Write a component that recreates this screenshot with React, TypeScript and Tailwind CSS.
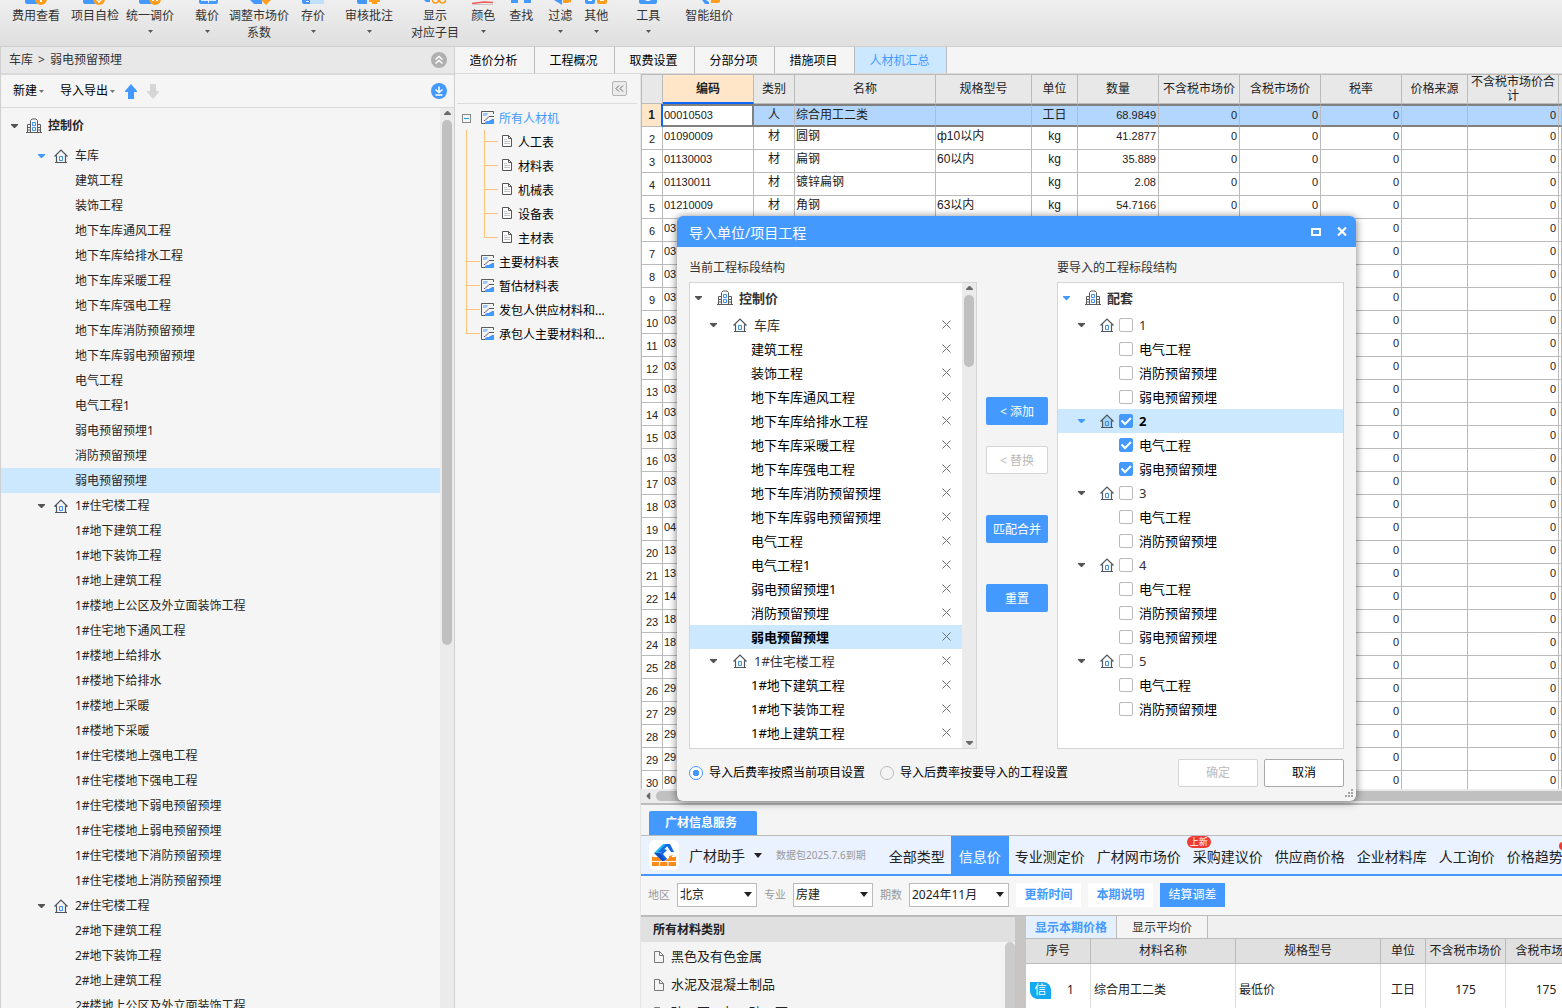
import React from "react";

/* ---------- icons ---------- */

function Caret({ className = "" }: { className?: string }) {
  return (
    <svg className={"shrink-0 " + className} width="7" height="4" viewBox="0 0 7 4" fill="currentColor" aria-hidden="true">
      <path d="M0 0h7v1L4 4H3L0 1z" />
    </svg>
  );
}

function SmallCaret({ className = "" }: { className?: string }) {
  return (
    <svg className={"shrink-0 " + className} width="5" height="3" viewBox="0 0 5 3" fill="currentColor" aria-hidden="true">
      <path d="M0 0h5L2.5 3z" />
    </svg>
  );
}

function BuildingIcon() {
  return (
    <svg className="shrink-0" width="16" height="16" viewBox="0 0 16 16" fill="none" aria-hidden="true">
      <path d="M4.500 14V2.500l1.500-1.500h4l1.500 1.500V14M1.500 14V6.500h3M14.500 14V6.500h-3M0 14.500h16M2 9.500h2M2 12h2M12 9.500h2M12 12h2" stroke="#5c5c5c" />
      <path d="M6.500 4.500h3v3h-3zM6.500 9.500h3v3h-3z" stroke="#3c8ef0" />
    </svg>
  );
}

function HouseIcon({ filled = false }: { filled?: boolean }) {
  return (
    <svg className="shrink-0" width="14" height="14" viewBox="0 0 14 14" fill="none" aria-hidden="true">
      <path d="M2.500 6v7.500h9V6L7 1.500z" fill={filled ? "#aad4f8" : "none"} />
      <path d="M0.500 7.500L7 1 13.500 7.500M2.500 6.500v7M11.500 6.500v7M1 13.500h12" stroke="#4d5560" strokeWidth="1.200" />
      <path d="M5.500 7.500h3v4h-3z" stroke="#3c8ef0" />
    </svg>
  );
}

function SheetIcon() {
  return (
    <svg className="mb-[2px] shrink-0" width="13" height="13" viewBox="0 0 13 13" fill="none" aria-hidden="true">
      <path d="M12.500 3V0.500h-12v12H4" stroke="#5a5a5a" />
      <path d="M2 2h5v1L5 5H2z" fill="#9cc9fb" />
      <path d="M3 9.500h1l4-4h5" stroke="#5a5a5a" />
      <path d="M4 13v-2l2-1h2l1-1h1l1-1h2v5z" fill="#4499ff" />
    </svg>
  );
}

function DocIcon() {
  return (
    <svg className="mb-[2px] shrink-0" width="10" height="12" viewBox="0 0 10 12" fill="none" aria-hidden="true">
      <path d="M0.500 0.500h6l3 3v8h-9z" fill="#fff" stroke="#555" />
      <path d="M6.500 0.500v3h3" stroke="#555" />
      <path d="M2 4.500h3M2 6.500h6M2 8.500h6" stroke="#c4c4c4" />
    </svg>
  );
}

function FileIcon() {
  return (
    <svg className="shrink-0" width="10" height="12" viewBox="0 0 10 12" fill="none" stroke="#777" aria-hidden="true">
      <path d="M0.500 0.500h5l4 4v7h-9zM5.500 0.500v4h4" />
    </svg>
  );
}

function CrossIcon() {
  return (
    <svg width="9" height="9" viewBox="0 0 9 9" stroke="#707070" fill="none" aria-hidden="true">
      <path d="M0.500 0.500l8 8M8.500 0.500l-8 8" />
    </svg>
  );
}

const B = "#4499ff";
const O = "#ff9d1e";

const ribbonIcons: Record<string, React.ReactNode> = {
  fee: (<><path d="M1 0h14v4H3a2 2 0 0 1-2-2z" fill={B} /><circle cx="17" cy="-1" r="6" fill={O} /><path d="M16 0h2v2h-2z" fill="#fff" /></>),
  check: (<><path d="M0 0h12v4H2a2 2 0 0 1-2-2z" fill={B} /><circle cx="16" cy="-1" r="6" fill={O} /><path d="M13 -1l3 3 4-4" stroke="#fff" strokeWidth="1.500" fill="none" /></>),
  adjust: (<><path d="M1 0h12v4H3a2 2 0 0 1-2-2z" fill={B} /><circle cx="17" cy="-1" r="6" fill={O} /><path d="M14 0h2v1h-2zM18 0h2v1h-2z" fill="#fff" /></>),
  load: (<><path d="M4 0h19v2a2 2 0 0 1-2 2H6a2 2 0 0 1-2-2z" fill={B} /><path d="M13 0h1v3h-1zM6 0h15v1H6z" fill="#dcebff" /></>),
  market: (<><path d="M3 0h12v4H7z" fill={B} /><path d="M14 0h10l-5 5z" fill={O} /></>),
  save: (<><path d="M1 0h10v4H3a2 2 0 0 1-2-2z" fill={B} /><path d="M9 0h14v4H9z" fill="#bfe0ff" /><path d="M5 1h3v1H5z" fill="#fff" /></>),
  review: (<><path d="M0 0h10v4H2a2 2 0 0 1-2-2z" fill={B} /><path d="M12 0h11v2H12zM15 2h5v2h-5z" fill={O} /></>),
  show: (<><path d="M1 0h6v2H3z" fill={B} /><circle cx="12.500" cy="0" r="3" fill="none" stroke={O} strokeWidth="1.500" /><circle cx="19.500" cy="0" r="3" fill="none" stroke={O} strokeWidth="1.500" /></>),
  color: (<><path d="M1 3.500l12-1.500 9 0.500" stroke="#ef5b5b" strokeWidth="1.500" fill="none" /><path d="M2 4.500h20" stroke="#c9c9c9" /></>),
  find: <path d="M2 0h7v3H2zM15 0h7v3h-7z" fill={B} />,
  filter: (<><path d="M6 0h8v5z" fill={B} /><path d="M15 0h8v2l-4 1h-4z" fill={O} /></>),
  other: (<><path d="M1 0h10v2a2 2 0 0 1-2 2H3a2 2 0 0 1-2-2z" fill={B} /><path d="M4 0h4v1H4z" fill="#fff" /><path d="M13 0h10v2a2 2 0 0 1-2 2h-6a2 2 0 0 1-2-2z" fill={O} /><path d="M16 0h4v1h-4z" fill="#fff" /></>),
  tool: (<><path d="M3 0h18v2a2 2 0 0 1-2 2H5a2 2 0 0 1-2-2z" fill={B} /><path d="M9 0h6l-2 1h-2z" fill="#fff" /></>),
  smart: (<><path d="M5 0h4l3 2v2H8z" fill={B} /><path d="M14 0h9v2l-2 1h-7z" fill={O} /></>),
};

/* ---------- ribbon ---------- */

type RibbonItem = { icon: string; lines: string[]; arrow?: boolean; space: string };

const ribbon: RibbonItem[] = [
  { icon: "fee", lines: ["费用查看"], space: "ml-3" },
  { icon: "check", lines: ["项目自检"], space: "ml-[11px]" },
  { icon: "adjust", lines: ["统一调价"], arrow: true, space: "ml-[7px]" },
  { icon: "load", lines: ["载价"], arrow: true, space: "ml-[21px]" },
  { icon: "market", lines: ["调整市场价", "系数"], space: "ml-[10px]" },
  { icon: "save", lines: ["存价"], arrow: true, space: "ml-3" },
  { icon: "review", lines: ["审核批注"], arrow: true, space: "ml-5" },
  { icon: "show", lines: ["显示", "对应子目"], space: "ml-[18px]" },
  { icon: "color", lines: ["颜色"], arrow: true, space: "ml-3" },
  { icon: "find", lines: ["查找"], space: "ml-[14px]" },
  { icon: "filter", lines: ["过滤"], arrow: true, space: "ml-[15px]" },
  { icon: "other", lines: ["其他"], arrow: true, space: "ml-3" },
  { icon: "tool", lines: ["工具"], arrow: true, space: "ml-7" },
  { icon: "smart", lines: ["智能组价"], space: "ml-[25px]" },
];

function Ribbon() {
  return (
    <header className="flex h-[47px] shrink-0 items-start border-b border-[#cfcfcf] bg-linear-to-b from-[#efefef] to-[#dfdfdf]">
      {ribbon.map((r) => (
        <button key={r.icon} className={"flex shrink-0 flex-col items-center leading-[17px] text-[#333] " + r.space}>
          <svg className="mb-px" width="24" height="6" viewBox="0 0 24 6" aria-hidden="true">{ribbonIcons[r.icon]}</svg>
          {r.lines.map((l) => (
            <span key={l} className="whitespace-nowrap">{l}</span>
          ))}
          {r.arrow && <SmallCaret className="mt-[6px] text-[#555]" />}
        </button>
      ))}
    </header>
  );
}

/* ---------- project tree ---------- */

type Branch = { name: string; open?: boolean; items: string[] };

const garage = [
  "建筑工程", "装饰工程", "地下车库通风工程", "地下车库给排水工程", "地下车库采暖工程", "地下车库强电工程",
  "地下车库消防预留预埋", "地下车库弱电预留预埋", "电气工程", "电气工程1", "弱电预留预埋1", "消防预留预埋", "弱电预留预埋",
];

const branches: Branch[] = [
  { name: "车库", open: true, items: garage },
  {
    name: "1#住宅楼工程",
    items: [
      "1#地下建筑工程", "1#地下装饰工程", "1#地上建筑工程", "1#楼地上公区及外立面装饰工程", "1#住宅地下通风工程",
      "1#楼地上给排水", "1#楼地下给排水", "1#楼地上采暖", "1#楼地下采暖", "1#住宅楼地上强电工程", "1#住宅楼地下强电工程",
      "1#住宅楼地下弱电预留预埋", "1#住宅楼地上弱电预留预埋", "1#住宅楼地下消防预留预埋", "1#住宅楼地上消防预留预埋",
    ],
  },
  { name: "2#住宅楼工程", items: ["2#地下建筑工程", "2#地下装饰工程", "2#地上建筑工程", "2#楼地上公区及外立面装饰工程"] },
];

function ProjectPanel() {
  return (
    <aside className="flex w-[455px] shrink-0 flex-col overflow-hidden border-x border-[#d0d0d0] bg-[#f5f5f5]">
      <div className="flex h-[28px] shrink-0 items-center justify-between border-b-2 border-[#d9d9d9] bg-[#e8e8e8] pr-[7px] pl-2 text-[#333]">
        <span className="flex gap-[5px]"><span>车库</span><span>&gt;</span><span>弱电预留预埋</span></span>
        <button aria-label="收起">
          <svg width="16" height="16" viewBox="0 0 16 16" fill="none" aria-hidden="true">
            <circle cx="8" cy="8" r="8" fill="#b0b0b0" />
            <path d="M4.500 7.500L8 4.500l3.500 3M4.500 11.500L8 8.500l3.500 3" stroke="#fff" strokeWidth="1.500" />
          </svg>
        </button>
      </div>
      <div className="flex h-[33px] shrink-0 items-center border-b border-[#d9d9d9] pr-[7px] pl-3 text-black">
        <button className="flex items-center gap-[2px]">新建<SmallCaret className="text-[#777]" /></button>
        <button className="ml-4 flex items-center gap-[2px]">导入导出<SmallCaret className="text-[#777]" /></button>
        <button aria-label="上移" className="ml-[10px]">
          <svg width="12" height="15" viewBox="0 0 12 15" fill={B} aria-hidden="true"><path d="M6 0l6 7v1H9v7H3V8H0V7z" /></svg>
        </button>
        <button aria-label="下移" className="ml-[10px]">
          <svg width="12" height="15" viewBox="0 0 12 15" fill="#d6d6d6" aria-hidden="true"><path d="M6 15L0 8V7h3V0h6v7h3v1z" /></svg>
        </button>
        <button aria-label="下载" className="ml-auto">
          <svg width="16" height="16" viewBox="0 0 16 16" fill="none" aria-hidden="true">
            <circle cx="8" cy="8" r="8" fill={B} />
            <path d="M8 3.500v6M4.500 6.500L8 9.500l3.500-3M4.500 12h7" stroke="#fff" strokeWidth="1.500" />
          </svg>
        </button>
      </div>
      <div className="flex min-h-0 flex-1">
        <ul className="min-w-0 flex-1 overflow-hidden text-[#262626]">
          <li className="flex h-[35px] items-center pl-[10px] font-bold">
            <Caret className="mr-2 text-[#555]" />
            <BuildingIcon />
            <span className="ml-[6px]">控制价</span>
          </li>
          {branches.map((b) => (
            <React.Fragment key={b.name}>
              <li className="flex h-[25px] items-center pl-[37px]">
                <Caret className={b.open ? "mr-[9px] text-[#4499ff]" : "mr-[9px] text-[#555]"} />
                <HouseIcon />
                <span className="ml-[7px]">{b.name}</span>
              </li>
              {b.items.map((n) => (
                <li key={n} className={"flex h-[25px] items-center pl-[74px] " + (n === "弱电预留预埋" ? "bg-[#cce8ff]" : "")}>{n}</li>
              ))}
            </React.Fragment>
          ))}
        </ul>
        <div className="flex w-[14px] flex-col items-center bg-[#ebebeb] text-[#6a6a6a]">
          <Caret className="mt-[3px] rotate-180" />
          <div className="mt-[5px] h-[525px] w-[10px] rounded-full bg-[#c0c0c0]" />
        </div>
      </div>
    </aside>
  );
}

/* ---------- tabs and report tree ---------- */

const tabs = ["造价分析", "工程概况", "取费设置", "分部分项", "措施项目"];

function Tabs() {
  return (
    <nav className="flex h-[27px] shrink-0 border-b border-[#d9d9d9] bg-[#f5f5f5] text-black">
      {tabs.map((t) => (
        <button key={t} className="w-20 border-r border-[#bbb] pt-[2px] pr-[2px]">{t}</button>
      ))}
      <button className="w-[92px] border-r border-[#bbb] bg-[#cce8ff] pr-[2px] pt-px text-[#4499ff]">人材机汇总</button>
    </nav>
  );
}

function Connector({ last = false }: { last?: boolean }) {
  return (
    <span className="flex h-full w-[14px] shrink-0 flex-col">
      <span className="h-1/2 border-b border-l border-[#ffc47a]" />
      <span className={last ? "h-1/2" : "h-1/2 border-l border-[#ffc47a]"} />
    </span>
  );
}

const subReports = ["人工表", "材料表", "机械表", "设备表", "主材表"];
const reports = ["主要材料表", "暂估材料表", "发包人供应材料和...", "承包人主要材料和..."];

function ReportTree() {
  return (
    <aside className="w-[186px] shrink-0 border-r border-[#e4e4e4] bg-[#f5f5f5] pl-[2px] text-black">
      <div className="mr-[3px] flex h-[30px] items-center justify-end border-b border-[#dcdcdc]">
        <button aria-label="折叠" className="mr-[10px] flex size-[15px] items-center justify-center rounded-xs border border-[#b5b5b5] bg-[#ebebeb]">
          <svg width="9" height="7" viewBox="0 0 9 7" fill="none" stroke="#666" aria-hidden="true">
            <path d="M4 0.500l-3 3 3 3M8 0.500l-3 3 3 3" />
          </svg>
        </button>
      </div>
      <ul className="pt-[2px] pl-[5px]">
        <li className="flex h-6 items-center">
          <span className="mr-[10px] flex size-[9px] items-center justify-center border border-[#888]">
            <span className="h-px w-[5px] bg-[#0aa0d8]" />
          </span>
          <SheetIcon />
          <span className="ml-[5px] pt-px text-[#4499ff]">所有人材机</span>
        </li>
        {subReports.map((n, i) => (
          <li key={n} className="flex h-6 items-center pl-1">
            <span className="h-full w-[18px] border-l border-[#ffc47a]" />
            <Connector last={i === subReports.length - 1} />
            <span className="ml-1"><DocIcon /></span>
            <span className="ml-[6px] pt-px">{n}</span>
          </li>
        ))}
        {reports.map((n, i) => (
          <li key={n} className="flex h-6 items-center pl-1">
            <Connector last={i === reports.length - 1} />
            <span className="ml-px"><SheetIcon /></span>
            <span className="ml-[5px] pt-px">{n}</span>
          </li>
        ))}
      </ul>
    </aside>
  );
}

/* ---------- resource grid ---------- */

type Row = { code: string; kind?: string; name?: string; spec?: string; unit?: string; qty?: string };

const head: Row[] = [
  { code: "00010503", kind: "人", name: "综合用工二类", unit: "工日", qty: "68.9849" },
  { code: "01090009", kind: "材", name: "圆钢", spec: "ф10以内", unit: "kg", qty: "41.2877" },
  { code: "01130003", kind: "材", name: "扁钢", spec: "60以内", unit: "kg", qty: "35.889" },
  { code: "01130011", kind: "材", name: "镀锌扁钢", unit: "kg", qty: "2.08" },
  { code: "01210009", kind: "材", name: "角钢", spec: "63以内", unit: "kg", qty: "54.7166" },
];
const prefixes = "03 03 03 03 03 03 03 03 03 03 03 03 03 04 13 13 14 18 18 28 29 29 29 29 80".split(" ");
const rows: Row[] = [...head, ...prefixes.map((code) => ({ code }))];

const headings = ["类别", "名称", "规格型号", "单位", "数量", "不含税市场价", "含税市场价", "税率", "价格来源", "不含税市场价合计"];

function Grid() {
  return (
    <div className="flex min-h-0 flex-1 flex-col">
      <div className="min-h-0 flex-1 overflow-hidden bg-white">
        <table className="w-full table-fixed border-separate border-spacing-0 border-t border-l border-[#bbb] font-['Liberation_Sans','Noto_Sans_CJK_SC',sans-serif] text-[#222]">
          <colgroup>
            <col className="w-[21px]" /><col className="w-[91px]" /><col className="w-[41px]" /><col className="w-[141px]" />
            <col className="w-[96px]" /><col className="w-[46px]" /><col className="w-[81px]" /><col className="w-[81px]" />
            <col className="w-[81px]" /><col className="w-[81px]" /><col className="w-[66px]" /><col className="w-[91px]" /><col />
          </colgroup>
          <thead>
            <tr className="h-[29px] bg-[#e8e8e8] leading-[14px]">
              <th className="border-r border-b border-[#bbb] p-0" />
              <th className="border-r border-b-2 border-r-[#bbb] border-b-[#0a66ff] bg-[#ffe6c8] p-0">编码</th>
              {headings.map((h) => (
                <th key={h} className="border-r border-b border-[#bbb] p-0 font-normal">{h}</th>
              ))}
              <th className="border-b border-[#bbb] p-0" />
            </tr>
          </thead>
          <tbody>
            {rows.map((r, i) => {
              const first = i === 0;
              const cell = first
                ? "border-r border-y-2 border-r-[#bbb] border-y-[#808080] bg-[#b3d6ff] p-0 align-top "
                : "border-r border-b border-[#bbb] p-0 align-top ";
              const num = cell + "pr-[2px]! text-right text-[11px]";
              return (
                <tr key={i} className="h-[23px] leading-[19px]">
                  <th className={first ? "border-r-2 border-b border-r-[#0a66ff] border-b-[#bbb] bg-[#ffe6c8] p-0" : "border-r border-b border-[#bbb] p-0 pt-[2px] text-[11px] font-normal"}>{i + 1}</th>
                  <td className={first ? "border-2 border-l-0 border-[#808080] bg-white p-0 pl-px align-top text-[11px]" : "border-r border-b border-[#bbb] p-0 pl-px align-top text-[11px]"}>{r.code}</td>
                  <td className={cell + "text-center"}>{r.kind}</td>
                  <td className={cell + "pl-px!"}>{r.name}</td>
                  <td className={cell + "pl-px!"}>{r.spec}</td>
                  <td className={cell + "text-center"}>{r.unit}</td>
                  <td className={num}>{r.qty}</td>
                  <td className={num}>0</td>
                  <td className={num}>0</td>
                  <td className={num}>0</td>
                  <td className={cell} />
                  <td className={num}>0</td>
                  <td className={cell} />
                </tr>
              );
            })}
          </tbody>
        </table>
      </div>
      <div className="flex h-[14px] shrink-0 items-center bg-[#ebebeb] pl-[4px] text-[#6a6a6a]">
        <Caret className="rotate-90" />
        <div className="ml-1 h-[10px] flex-1 rounded-l-full bg-[#c0c0c0]" />
      </div>
    </div>
  );
}

/* ---------- price service ---------- */

function Picker({ label, value, width }: { label: string; value: string; width: string }) {
  return (
    <label className="flex items-center gap-[7px] text-[11px] text-[#999]">
      {label}
      <span className={"relative flex items-center " + width}>
        <select className="h-6 w-full appearance-none rounded-none border border-[#bbb] bg-white pl-[2px] text-xs text-[#222]" defaultValue={value}>
          <option>{value}</option>
        </select>
        <svg className="pointer-events-none absolute right-[5px] mb-[2px]" width="8" height="5" viewBox="0 0 8 5" fill="#222" aria-hidden="true">
          <path d="M0 0h8L4 5z" />
        </svg>
      </span>
    </label>
  );
}

const marketLinks = ["专业测定价", "广材网市场价", "采购建议价", "供应商价格", "企业材料库", "人工询价", "价格趋势"];
const materials = ["黑色及有色金属", "水泥及混凝土制品", "砖、瓦、灰、砂、石"];

function PriceService() {
  return (
    <section className="flex h-[205px] shrink-0 flex-col overflow-hidden border-t-2 border-[#bcbcbc] bg-[#f4f4f4]">
      <div className="flex h-[31px] shrink-0 items-end border-b border-[#bbb] pl-2">
        <button className="h-6 w-[108px] rounded-t-xs bg-[#4499ff] pr-1 font-bold text-white">广材信息服务</button>
      </div>
      <nav className="flex h-10 shrink-0 items-center border-b-2 border-[#4499ff] bg-[#eaf1ff] pl-2 text-sm whitespace-nowrap text-[#222]">
        <span className="flex size-[30px] shrink-0 items-center justify-center rounded-md bg-white">
          <svg width="24" height="24" viewBox="0 0 24 24" aria-hidden="true">
            <path d="M0 14h24v9H0z" fill="#ff8a17" />
            <path d="M0 13l4 4h16l4-4v3H0z" fill="#ff8a17" />
            <path d="M4 12l7 7 6-4 3-3-4-6H8z" fill="#fff" />
            <path d="M0 18.500h24M7.500 18v5M16 18v5" stroke="#fff" strokeWidth="1.200" />
            <path d="M17 13l4-1-4 5z" fill="#ff8a17" />
            <path d="M11 1h7L8 10H2z" fill="#22b8f5" />
            <path d="M2 10h6l7 6-3 2h-2z" fill="#0a4fc4" />
            <path d="M14 1h4l4 8h-3l-4-6-6 6H6z" fill="#1567e6" />
            <path d="M8 10l4-4 3 1-4 4 4 5h-3z" fill="#1567e6" />
          </svg>
        </span>
        <button className="ml-[10px] flex shrink-0 items-center pt-px">
          广材助手
          <svg className="ml-[9px]" width="8" height="5" viewBox="0 0 8 5" fill="#222" aria-hidden="true"><path d="M0 0h8L4 5z" /></svg>
        </button>
        <span className="ml-[14px] text-[10px] text-[#999]">数据包2025.7.6到期</span>
        <a href="#all" className="ml-[17px] px-1.5 pt-[3px]">全部类型</a>
        <a href="#info" className="flex h-full items-center bg-[#4499ff] px-2 pt-[3px] text-white">信息价</a>
        {marketLinks.map((m) => (
          <a key={m} href="#market" className="relative px-1.5 pt-[3px]">
            {m}
            {m === "采购建议价" && (
              <span className="absolute -top-2 left-0 flex h-3 w-6 items-center justify-center rounded-full bg-[#f03a34] text-[9px] leading-none text-white">上新</span>
            )}
            {m === "价格趋势" && <span className="absolute -top-[2px] left-[58px] size-2 rounded-full bg-[#f03a34]" />}
          </a>
        ))}
      </nav>
      <div className="flex h-10 shrink-0 items-center gap-[7px] border-b border-[#bbb] bg-[#f6f6f6] pb-px pl-[7px]">
        <Picker label="地区" value="北京" width="w-20" />
        <Picker label="专业" value="房建" width="w-20" />
        <Picker label="期数" value="2024年11月" width="w-[100px]" />
        <button className="h-6 w-[65px] bg-white font-bold text-[#4499ff]">更新时间</button>
        <button className="h-6 w-[65px] bg-white font-bold text-[#4499ff]">本期说明</button>
        <button className="h-6 w-[65px] bg-[#4499ff] text-white">结算调差</button>
      </div>
      <div className="flex min-h-0 flex-1">
        <div className="flex w-[374px] shrink-0 flex-col border-t border-[#bbb]">
          <h2 className="flex h-[25px] shrink-0 items-center bg-[#e0e0e0] pl-3 font-bold text-[#222]">所有材料类别</h2>
          <div className="flex min-h-0 flex-1">
            <ul className="min-w-0 flex-1 overflow-hidden pt-px text-[13px] text-[#222]">
              {materials.map((m) => (
                <li key={m} className="flex h-7 items-center pl-[13px]">
                  <FileIcon />
                  <span className="ml-[7px]">{m}</span>
                </li>
              ))}
            </ul>
            <div className="w-[10px] rounded-t-full bg-[#cbcbcb]" />
          </div>
        </div>
        <div className="w-[11px] shrink-0 bg-[#c8c6c4]" />
        <div className="flex min-w-0 flex-1 flex-col bg-white">
          <div className="flex h-[22px] shrink-0 bg-[#f0f0f0] text-[#333]">
            <button className="w-[91px] border-r border-[#bbb] bg-[#e4f0fe] pt-px font-bold text-[#4499ff]">显示本期价格</button>
            <button className="w-[91px] border-r border-[#bbb] bg-[#f4f4f4] pt-[2px]">显示平均价</button>
          </div>
          <table className="w-full table-fixed border-separate border-spacing-0 text-[#222]">
            <colgroup>
              <col className="w-[65px]" /><col className="w-[145px]" /><col className="w-[145px]" /><col className="w-[45px]" /><col className="w-20" /><col className="w-20" />
            </colgroup>
            <thead>
              <tr className="h-[26px] bg-[#e0e0e0]">
                {["序号", "材料名称", "规格型号", "单位", "不含税市场价", "含税市场价"].map((h) => (
                  <th key={h} className="overflow-hidden border-y border-r border-[#bbb] p-0 font-normal whitespace-nowrap">{h}</th>
                ))}
              </tr>
            </thead>
            <tbody>
              <tr className="h-[52px]">
                <td className="border-r border-[#ddd] p-0">
                  <div className="flex items-center pl-1">
                    <span className="flex h-[17px] w-[21px] items-center justify-center rounded-tr-lg rounded-bl-lg bg-[#14a9f0] text-white">信</span>
                    <span className="ml-4">1</span>
                  </div>
                </td>
                <td className="border-r border-[#ddd] p-0 pl-[3px]">综合用工二类</td>
                <td className="border-r border-[#ddd] p-0 pl-[3px]">最低价</td>
                <td className="border-r border-[#ddd] p-0 text-center">工日</td>
                <td className="border-r border-[#ddd] p-0 text-center">175</td>
                <td className="p-0 text-center">175</td>
              </tr>
            </tbody>
          </table>
        </div>
      </div>
    </section>
  );
}

/* ---------- import dialog ---------- */

const currentBranches: Branch[] = [
  { name: "车库", items: garage },
  { name: "1#住宅楼工程", items: ["1#地下建筑工程", "1#地下装饰工程", "1#地上建筑工程"] },
];

const importBranches = [
  { name: "1", on: false, items: ["电气工程", "消防预留预埋", "弱电预留预埋"] },
  { name: "2", on: true, items: ["电气工程", "弱电预留预埋"] },
  { name: "3", on: false, items: ["电气工程", "消防预留预埋"] },
  { name: "4", on: false, items: ["电气工程", "消防预留预埋", "弱电预留预埋"] },
  { name: "5", on: false, items: ["电气工程", "消防预留预埋"] },
];

function Tick({ label, on, className = "" }: { label: string; on: boolean; className?: string }) {
  return (
    <label className={"flex items-center gap-[6px] " + className}>
      <span className="relative flex size-[14px]">
        <input type="checkbox" defaultChecked={on} className="peer size-[14px] appearance-none rounded-xs border border-[#bbb] bg-white checked:border-[#4499ff] checked:bg-[#4499ff]" />
        <svg className="pointer-events-none absolute top-0 left-0 hidden peer-checked:block" width="14" height="14" viewBox="0 0 14 14" fill="none" aria-hidden="true">
          <path d="M2.500 6.500l3.500 3.500 6-6" stroke="#fff" strokeWidth="2" />
        </svg>
      </span>
      <span className="pt-[2px]">{label}</span>
    </label>
  );
}

function RemoveButton({ name }: { name: string }) {
  return (
    <button aria-label={"移除" + name} className="mr-[11px] mb-px ml-auto"><CrossIcon /></button>
  );
}

function ImportDialog() {
  return (
    <div role="dialog" aria-label="导入单位/项目工程" className="absolute top-[216px] left-[677px] w-[679px] rounded-md bg-[#f4f4f4] text-[#333] shadow-[0_1px_8px_rgba(0,0,0,0.55)]">
      <div className="flex h-[31px] items-center rounded-t-md bg-[#4499ff] pr-[9px] pl-3 text-white">
        <h1 className="pt-[2px] text-sm">导入单位/项目工程</h1>
        <button aria-label="最大化" className="ml-auto">
          <svg width="10" height="8" viewBox="0 0 10 8" fill="none" aria-hidden="true"><path d="M1 1h8v6H1z" stroke="#fff" strokeWidth="2" /></svg>
        </button>
        <button aria-label="关闭" className="ml-4">
          <svg width="10" height="9" viewBox="0 0 10 9" fill="none" aria-hidden="true"><path d="M1 0.500l8 8M9 0.500l-8 8" stroke="#fff" strokeWidth="2.200" /></svg>
        </button>
      </div>
      <div className="flex px-3 pt-[10px]">
        <div className="w-[288px]">
          <h2 className="h-[25px] leading-[22px]">当前工程标段结构</h2>
          <div className="flex h-[467px] border border-[#d5d5d5] bg-white text-[13px]">
            <ul className="min-w-0 flex-1 overflow-hidden">
              <li className="flex h-[30px] items-center pl-[5px] font-bold">
                <Caret className="mr-[15px] text-[#555]" />
                <BuildingIcon />
                <span className="ml-[6px] pt-[2px]">控制价</span>
              </li>
              {currentBranches.map((b) => (
                <React.Fragment key={b.name}>
                  <li className="flex h-6 items-center pl-5">
                    <Caret className="mr-4 text-[#555]" />
                    <HouseIcon />
                    <span className="ml-[7px] pt-[2px]">{b.name}</span>
                    <RemoveButton name={b.name} />
                  </li>
                  {b.items.map((n) => (
                    <li key={n} className={"flex h-6 items-center pl-[61px] text-black " + (n === "弱电预留预埋" ? "bg-[#cce8ff] font-bold" : "")}>
                      <span className="pt-[2px]">{n}</span>
                      <RemoveButton name={n} />
                    </li>
                  ))}
                </React.Fragment>
              ))}
            </ul>
            <div className="flex w-[14px] flex-col items-center bg-[#ebebeb] py-[3px] text-[#6a6a6a]">
              <Caret className="rotate-180" />
              <div className="mt-[5px] h-[72px] w-[10px] rounded-full bg-[#c0c0c0]" />
              <Caret className="mt-auto" />
            </div>
          </div>
        </div>
        <div className="flex flex-1 flex-col items-center pt-[140px]">
          <button className="h-7 w-[62px] rounded-xs bg-[#4499ff] pt-[2px] text-white">&lt;&nbsp;添加</button>
          <button disabled className="mt-[21px] h-7 w-[62px] rounded-xs border border-[#d5d5d5] bg-white pt-[2px] text-[#bbb]">&lt;&nbsp;替换</button>
          <button className="mt-[41px] h-7 w-[62px] rounded-xs bg-[#4499ff] pt-[2px] text-white">匹配合并</button>
          <button className="mt-[41px] h-7 w-[62px] rounded-xs bg-[#4499ff] pt-[2px] text-white">重置</button>
        </div>
        <div className="w-[287px]">
          <h2 className="h-[25px] leading-[22px]">要导入的工程标段结构</h2>
          <ul className="h-[467px] border border-[#d5d5d5] bg-white text-[13px]">
            <li className="flex h-[30px] items-center pl-[5px] font-bold">
              <Caret className="mr-[15px] text-[#4499ff]" />
              <BuildingIcon />
              <span className="ml-[6px] pt-[2px]">配套</span>
            </li>
            {importBranches.map((b) => (
              <React.Fragment key={b.name}>
                <li className={"flex h-6 items-center pl-5 " + (b.on ? "bg-[#cce8ff] font-bold text-black" : "")}>
                  <Caret className={b.on ? "mr-[15px] text-[#4499ff]" : "mr-[15px] text-[#555]"} />
                  <HouseIcon filled={b.on} />
                  <Tick label={b.name} on={b.on} className="ml-[5px]" />
                </li>
                {b.items.map((n) => (
                  <li key={n} className="flex h-6 items-center pl-[61px] text-black">
                    <Tick label={n} on={b.on} />
                  </li>
                ))}
              </React.Fragment>
            ))}
          </ul>
        </div>
      </div>
      <div className="relative flex h-[52px] items-center px-3 pb-[5px] text-black">
        <label className="flex items-center gap-[6px]">
          <input type="radio" name="rate" defaultChecked className="size-[14px] appearance-none rounded-full border border-[#4499ff] bg-[radial-gradient(#4499ff_3px,#fff_3px)]" />
          导入后费率按照当前项目设置
        </label>
        <label className="ml-[15px] flex items-center gap-[6px]">
          <input type="radio" name="rate" className="size-[14px] appearance-none rounded-full border border-[#bbb] bg-[#f4f4f4]" />
          导入后费率按要导入的工程设置
        </label>
        <button disabled className="ml-auto h-7 w-20 rounded-xs border border-[#d5d5d5] bg-white pt-px text-[#bbb]">确定</button>
        <button className="ml-[6px] h-7 w-20 rounded-xs border border-[#aaa] bg-white pt-px">取消</button>
        <svg className="absolute right-[3px] bottom-[4px]" width="8" height="8" viewBox="0 0 8 8" fill="#a5a5a5" aria-hidden="true">
          <path d="M6 0h2v2H6zM3 3h2v2H3zM6 3h2v2H6zM0 6h2v2H0zM3 6h2v2H3zM6 6h2v2H6z" />
        </svg>
      </div>
    </div>
  );
}

export default function App() {
  return (
    <div className="relative flex h-screen flex-col overflow-hidden bg-[#f5f5f5] font-['Noto_Sans','Noto_Sans_CJK_SC',sans-serif] text-xs">
      <Ribbon />
      <div className="flex min-h-0 flex-1">
        <ProjectPanel />
        <div className="flex min-w-0 flex-1 flex-col">
          <Tabs />
          <div className="flex min-h-0 flex-1">
            <ReportTree />
            <main className="flex min-w-0 flex-1 flex-col">
              <Grid />
              <PriceService />
            </main>
          </div>
        </div>
      </div>
      <ImportDialog />
    </div>
  );
}
